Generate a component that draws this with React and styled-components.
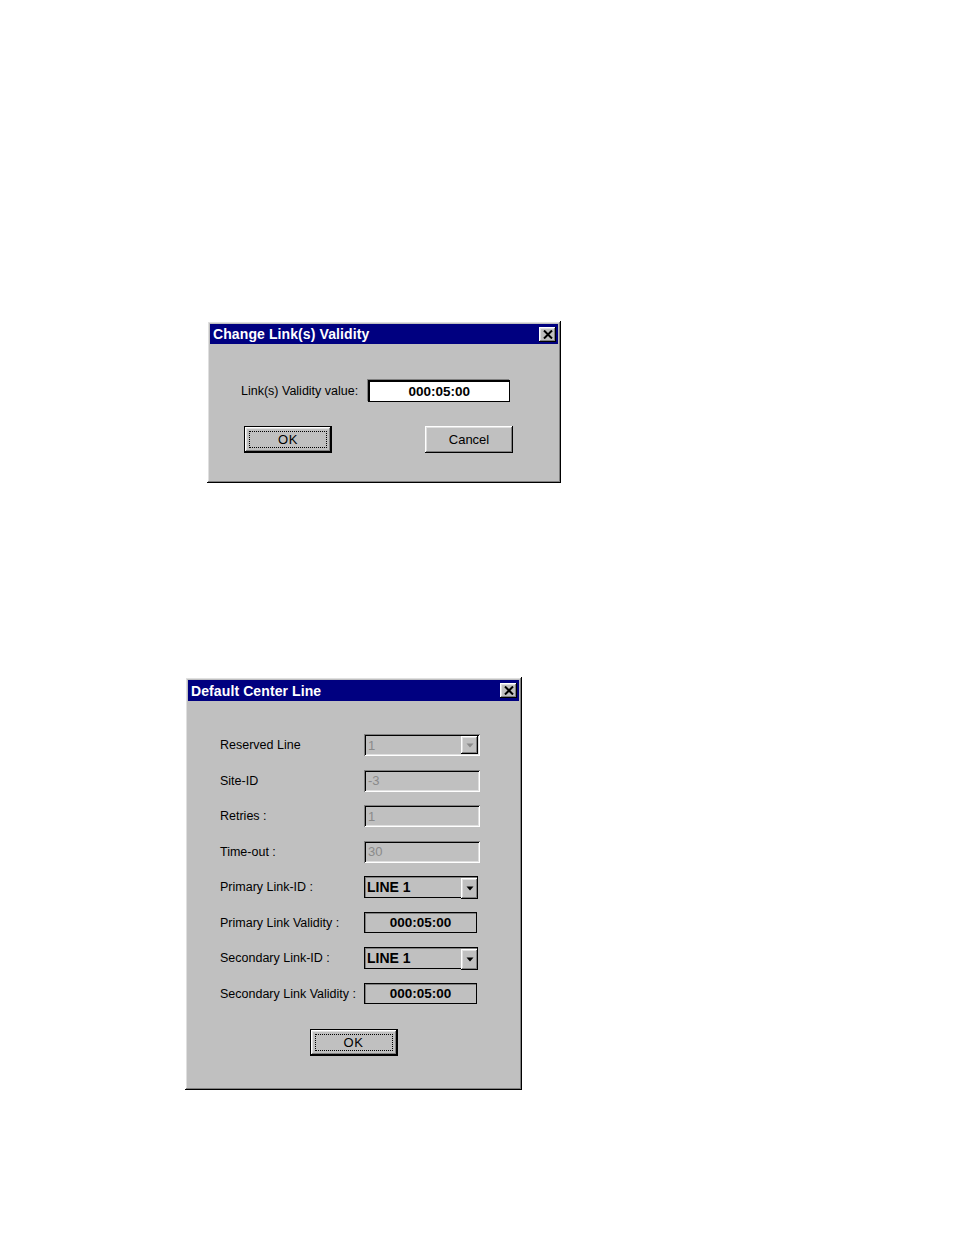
import React from 'react';
import styled, { createGlobalStyle } from 'styled-components';

const GlobalStyle = createGlobalStyle`
  html, body {
    margin: 0;
    padding: 0;
    background: #ffffff;
  }
  body {
    font-family: "Liberation Sans", Arial, sans-serif;
  }
`;

const raised = `
  box-shadow: inset -1px -1px #000000, inset 1px 1px #ffffff,
    inset -2px -2px #808080, inset 2px 2px #dfdfdf;
`;

const sunken = `
  box-shadow: inset 1px 1px #808080, inset -1px -1px #ffffff,
    inset 2px 2px #000000, inset -2px -2px #dfdfdf;
`;

const Page = styled.div`
  display: flex;
  flex-direction: column;
  align-items: flex-start;
  gap: 194px;
  padding-top: 321px;
  min-height: 1235px;
  box-sizing: border-box;
`;

const Window = styled.div`
  display: flex;
  flex-direction: column;
  box-sizing: border-box;
  width: ${(p) => p.$width}px;
  height: ${(p) => p.$height}px;
  margin-left: ${(p) => p.$left}px;
  padding: 3px;
  background: #c0c0c0;
  ${raised}
`;

const TitleBar = styled.div`
  display: flex;
  align-items: center;
  justify-content: space-between;
  height: ${(p) => p.$height || 20}px;
  padding: 0 2px 0 3px;
  background: #000080;
  color: #ffffff;
  font-weight: bold;
  font-size: 14px;
  letter-spacing: 0.1px;
`;

const CloseButton = styled.div`
  display: flex;
  align-items: center;
  justify-content: center;
  width: 17px;
  height: 15px;
  background: #c0c0c0;
  ${raised}
`;

const Body = styled.div`
  display: flex;
  flex-direction: column;
  padding: ${(p) => p.$pad};
`;

const InlineRow = styled.div`
  display: flex;
  align-items: center;
  gap: 10px;
  height: 22px;
`;

const Label = styled.span`
  font-size: 12.5px;
  color: #000000;
  white-space: nowrap;
`;

const ValueBox = styled.div`
  display: flex;
  align-items: center;
  justify-content: center;
  box-sizing: border-box;
  width: ${(p) => p.$width}px;
  height: ${(p) => p.$height || 22}px;
  background: ${(p) => (p.$white ? '#ffffff' : '#c0c0c0')};
  border: 1px solid #000000;
  box-shadow: ${(p) =>
    p.$white ? 'inset 1px 1px #000000, -1px -1px #808080' : 'inset 1px 1px #808080'};
  font-weight: bold;
  font-size: 13.5px;
  color: #000000;
`;

const ButtonRow = styled.div`
  display: flex;
  justify-content: ${(p) => p.$justify || 'flex-start'};
  gap: ${(p) => p.$gap || 0}px;
  margin-top: ${(p) => p.$top}px;
  padding-left: ${(p) => p.$indent || 0}px;
`;

const Button = styled.button`
  display: flex;
  align-items: center;
  justify-content: center;
  box-sizing: border-box;
  width: 88px;
  height: 27px;
  padding: 0;
  border: ${(p) => (p.$default ? '1px solid #000000' : 'none')};
  background: #c0c0c0;
  font-family: "Liberation Sans", Arial, sans-serif;
  font-size: 13px;
  color: #000000;
  ${raised}
`;

const FocusRing = styled.span`
  display: flex;
  align-items: center;
  justify-content: center;
  width: calc(100% - 8px);
  height: calc(100% - 8px);
  border: 1px dotted #000000;
  box-sizing: border-box;
  letter-spacing: 0.5px;
`;

const FormGrid = styled.div`
  display: grid;
  grid-template-columns: 144px auto;
  grid-auto-rows: 22px;
  row-gap: 13.5px;
  align-items: center;
`;

const DisabledField = styled.div`
  position: relative;
  display: flex;
  align-items: center;
  box-sizing: border-box;
  width: 116px;
  height: 22px;
  padding-left: 4px;
  background: #c0c0c0;
  color: #8a8a8a;
  font-size: 13px;
  ${sunken}
`;

const Combo = styled.div`
  position: relative;
  display: flex;
  align-items: center;
  box-sizing: border-box;
  width: 114px;
  height: 22px;
  padding-left: 2px;
  background: #c0c0c0;
  border: 1px solid #000000;
  box-shadow: inset 1px 1px #808080;
  font-weight: bold;
  font-size: 14px;
  color: #000000;
`;

const ArrowButton = styled.div`
  position: absolute;
  right: ${(p) => p.$right}px;
  top: ${(p) => p.$topOff}px;
  display: flex;
  align-items: center;
  justify-content: center;
  width: 17px;
  height: ${(p) => p.$h}px;
  background: #c0c0c0;
  ${raised}
`;

const CloseIcon = () => (
  <svg width="10" height="9" viewBox="0 0 10 9">
    <path d="M1 0.5 L9 8.5 M9 0.5 L1 8.5" stroke="#000" strokeWidth="2" />
  </svg>
);

const DownArrow = ({ color = '#000' }) => (
  <svg width="8" height="5" viewBox="0 0 8 5">
    <polygon points="0.5,0.5 7.5,0.5 4,4.5" fill={color} />
  </svg>
);

const Title = ({ text, height }) => (
  <TitleBar $height={height}>
    <span>{text}</span>
    <CloseButton>
      <CloseIcon />
    </CloseButton>
  </TitleBar>
);

const ChangeValidityDialog = () => (
  <Window $width={354} $height={162} $left={207}>
    <Title text="Change Link(s) Validity" />
    <Body $pad="36px 0 0 31px">
      <InlineRow>
        <Label>Link(s) Validity value:</Label>
        <ValueBox $width={142} $white>
          000:05:00
        </ValueBox>
      </InlineRow>
      <ButtonRow $top={24} $indent={3} $gap={93}>
        <Button $default>
          <FocusRing>OK</FocusRing>
        </Button>
        <Button>Cancel</Button>
      </ButtonRow>
    </Body>
  </Window>
);

const DefaultCenterLineDialog = () => (
  <Window $width={337} $height={413} $left={185}>
    <Title text="Default Center Line" height={21} />
    <Body $pad="33px 0 0 32px">
      <FormGrid>
        <Label>Reserved Line</Label>
        <DisabledField>
          1
          <ArrowButton $right={2} $topOff={2} $h={18}>
            <DownArrow color="#8a8a8a" />
          </ArrowButton>
        </DisabledField>

        <Label>Site-ID</Label>
        <DisabledField>-3</DisabledField>

        <Label>Retries :</Label>
        <DisabledField>1</DisabledField>

        <Label>Time-out :</Label>
        <DisabledField>30</DisabledField>

        <Label>Primary Link-ID :</Label>
        <Combo>
          LINE 1
          <ArrowButton $right={-1} $topOff={1} $h={21}>
            <DownArrow />
          </ArrowButton>
        </Combo>

        <Label>Primary Link Validity :</Label>
        <ValueBox $width={113} $height={21}>
          000:05:00
        </ValueBox>

        <Label>Secondary Link-ID :</Label>
        <Combo>
          LINE 1
          <ArrowButton $right={-1} $topOff={1} $h={21}>
            <DownArrow />
          </ArrowButton>
        </Combo>

        <Label>Secondary Link Validity :</Label>
        <ValueBox $width={113} $height={21}>
          000:05:00
        </ValueBox>
      </FormGrid>
      <ButtonRow $top={24} $justify="center" style={{ marginLeft: -32 }}>
        <Button $default>
          <FocusRing>OK</FocusRing>
        </Button>
      </ButtonRow>
    </Body>
  </Window>
);

export default function App() {
  return (
    <>
      <GlobalStyle />
      <Page>
        <ChangeValidityDialog />
        <DefaultCenterLineDialog />
      </Page>
    </>
  );
}
